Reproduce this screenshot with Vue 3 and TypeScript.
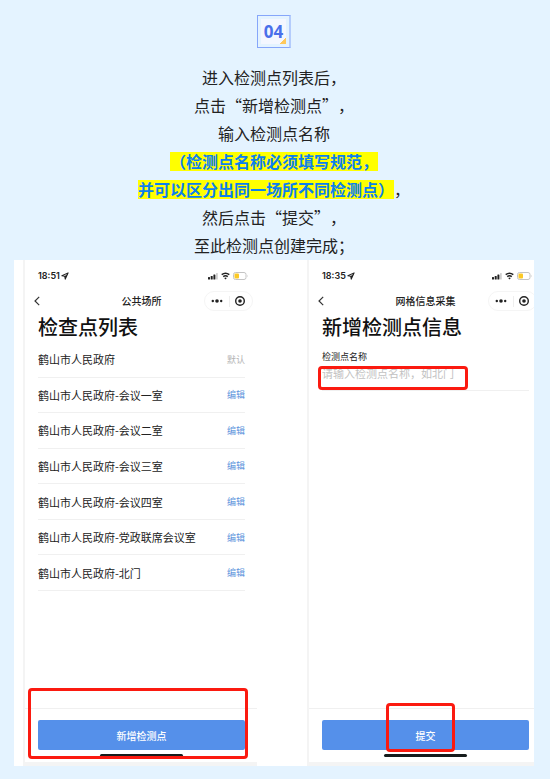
<script setup lang="ts">
import { ref } from 'vue'

interface Point {
  name: string
  action: string
  isDefault?: boolean
}

const points: Point[] = [
  { name: '鹤山市人民政府', action: '默认', isDefault: true },
  { name: '鹤山市人民政府-会议一室', action: '编辑' },
  { name: '鹤山市人民政府-会议二室', action: '编辑' },
  { name: '鹤山市人民政府-会议三室', action: '编辑' },
  { name: '鹤山市人民政府-会议四室', action: '编辑' },
  { name: '鹤山市人民政府-党政联席会议室', action: '编辑' },
  { name: '鹤山市人民政府-北门', action: '编辑' },
]

const screens = [
  { id: 'list', time: '18:51', nav: '公共场所', title: '检查点列表', submit: '新增检测点' },
  { id: 'form', time: '18:35', nav: '网格信息采集', title: '新增检测点信息', submit: '提交' },
]

const pointName = ref('')
</script>

<template>
  <main class="article">
    <div class="badge"><span class="badge-number">04</span></div>

    <div class="steps">
      <p>进入检测点列表后，</p>
      <p>点击“新增检测点”，</p>
      <p>输入检测点名称</p>
      <p><strong class="mark">（检测点名称必须填写规范，</strong></p>
      <p><strong class="mark">并可以区分出同一场所不同检测点）</strong>，</p>
      <p>然后点击“提交”，</p>
      <p>至此检测点创建完成；</p>
    </div>

    <div class="shots">
      <section v-for="s in screens" :key="s.id" class="phone" :class="s.id">
        <div class="screen">
          <div class="status">
            <span class="time">{{ s.time }}</span>
            <svg class="locate" width="8" height="8" viewBox="0 0 9 9">
              <path d="M8 1 L1 4.2 L4.2 4.8 L4.8 8 Z" fill="none" stroke="#222" stroke-width="1.2" stroke-linejoin="round" />
              <path d="M8 1 L4.2 4.8 L4.8 8 Z" fill="#222" />
            </svg>
            <svg class="signals" width="42" height="10" viewBox="0 0 42 10">
              <rect x="1" y="6" width="2" height="2.5" rx=".5" fill="#222" />
              <rect x="3.7" y="5" width="2" height="3.5" rx=".5" fill="#222" />
              <rect x="6.4" y="3.5" width="2" height="5" rx=".5" fill="#222" />
              <rect x="9.1" y="2" width="1.6" height="6.5" rx=".5" fill="#c9c9c9" />
              <path d="M14.7 3.7 Q18.5 .6 22.3 3.7" fill="none" stroke="#222" stroke-width="1.5" />
              <path d="M16.2 5.6 Q18.5 3.8 20.8 5.6" fill="none" stroke="#222" stroke-width="1.4" />
              <path d="M17.2 7 Q18.5 6.1 19.8 7 L18.5 8.5 Z" fill="#222" />
              <rect x="26.5" y="1.5" width="12.5" height="7" rx="2" fill="#fff" stroke="#c4c4c4" />
              <rect x="27.5" y="2.5" width="4.5" height="5" rx="1" fill="#fbc926" />
              <path d="M40.5 3.8 Q41.6 5 40.5 6.2 Z" fill="#bdbdbd" />
            </svg>
          </div>

          <header class="nav">
            <button class="back" aria-label="返回">
              <svg width="6" height="10" viewBox="0 0 6 10">
                <path d="M5.2 .8 L1 5 L5.2 9.2" fill="none" stroke="#333" stroke-width="1.2" />
              </svg>
            </button>
            <span class="nav-title">{{ s.nav }}</span>
            <div class="capsule">
              <button aria-label="更多">
                <svg width="12" height="10" viewBox="0 0 12 10">
                  <circle cx="1.8" cy="5" r="1.2" fill="#222" />
                  <circle cx="6" cy="5" r="1.8" fill="#222" />
                  <circle cx="10.2" cy="5" r="1.2" fill="#222" />
                </svg>
              </button>
              <button class="close" aria-label="关闭">
                <svg width="12" height="12" viewBox="0 0 12 12">
                  <circle cx="6" cy="6" r="4.3" fill="none" stroke="#222" stroke-width="1.4" />
                  <circle cx="6" cy="6" r="1.8" fill="#222" />
                </svg>
              </button>
            </div>
          </header>

          <h2 class="title">{{ s.title }}</h2>

          <ul v-if="s.id === 'list'" class="points">
            <li v-for="p in points" :key="p.name">
              <span>{{ p.name }}</span>
              <span v-if="p.isDefault" class="tag">{{ p.action }}</span>
              <button v-else class="tag edit">{{ p.action }}</button>
            </li>
          </ul>

          <form v-else class="field" @submit.prevent>
            <label for="point-name">检测点名称</label>
            <input id="point-name" v-model="pointName" type="text" placeholder="请输入检测点名称，如北门" />
            <span class="outline"></span>
          </form>

          <footer class="actions">
            <button class="primary">{{ s.submit }}</button>
            <span class="home"></span>
            <span class="outline"></span>
          </footer>
        </div>
      </section>
    </div>
  </main>
</template>

<style>
body {
  margin: 0;
  background: #e4f3ff;
}
</style>

<style scoped>
* {
  box-sizing: border-box;
}

.article {
  padding: 15px 16px 13px 14px;
  font-family: "Noto Sans CJK SC", sans-serif;
  text-spacing-trim: space-all;
  color: #222;
}

button {
  margin: 0;
  padding: 0;
  border: 0;
  background: none;
  font: inherit;
  color: inherit;
  cursor: pointer;
}

.badge {
  width: 34px;
  height: 33px;
  margin: 0 auto 15px;
  padding: 3px;
  border: 1px solid #86a6fa;
  border-right: 2px solid #b4ccfc;
}

.badge-number {
  display: block;
  height: 25px;
  background: linear-gradient(135deg, transparent 50%, #ffc85a 50%) right bottom / 7px 7px no-repeat #f4f7ff;
  font: bold 17px/25px "Open Sans", sans-serif;
  text-align: center;
  color: #4a6fea;
}

.steps {
  padding-bottom: 1px;
  font-size: 16px;
  line-height: 28px;
  text-align: center;
}

.steps p {
  height: 28px;
  margin: 0;
  white-space: nowrap;
}

.mark {
  display: inline-block;
  line-height: 19px;
  background: #ff0;
  color: #0c80ee;
}

.shots {
  display: grid;
  grid-template-columns: 234fr 227fr;
  gap: 50px;
  padding-left: 9px;
  background: #fff;
}

.phone {
  display: flex;
  min-width: 0;
  border: solid #f4f4f4;
  border-width: 0 0 4px 2px;
  overflow: hidden;
}

.screen {
  display: flex;
  flex: 1;
  flex-direction: column;
  min-width: 0;
  min-height: 502px;
  padding: 0 12px 0 13px;
}

.form .screen {
  margin-right: -7px;
}

.status {
  display: flex;
  align-items: center;
  height: 31px;
}

.time {
  font: 600 9px/12px Inter, sans-serif;
}

.locate {
  margin-left: 1px;
}

.signals {
  margin: 0 -4px 0 auto;
}

.nav {
  display: grid;
  grid-template-columns: 1fr auto 1fr;
  align-items: center;
  height: 20px;
  margin: 0 -8px 0 -4px;
}

.back {
  display: flex;
  justify-self: start;
}

.nav-title {
  padding-right: 4px;
  font-size: 10px;
  line-height: 20px;
  font-weight: 500;
}

.capsule {
  display: grid;
  grid-template-columns: 1fr 1fr;
  justify-self: end;
  width: 49px;
  height: 20px;
  border: 1px solid #f5f5f5;
  border-radius: 10px;
}

.capsule button {
  display: flex;
  align-items: center;
  justify-content: center;
}

.capsule .close {
  position: relative;
}

.capsule .close::before {
  content: "";
  position: absolute;
  left: 0;
  width: 1px;
  height: 11px;
  background: #eee;
}

.title {
  margin: 0;
  padding-top: 1px;
  font-size: 20px;
  font-weight: 500;
  line-height: 30px;
  color: #111;
  white-space: nowrap;
}

.points {
  display: grid;
  grid-auto-rows: 1fr;
  min-height: 249px;
  margin: 0;
  padding: 0;
  list-style: none;
  font-size: 11px;
}

.points li {
  display: flex;
  align-items: center;
  justify-content: space-between;
  border-bottom: 1px solid #f0f0f0;
  white-space: nowrap;
}

.tag {
  font-size: 9px;
  color: #b4b4b4;
}

.edit {
  color: #5c93dc;
}

.field {
  position: relative;
  display: flex;
  flex-direction: column;
  padding: 8px 0;
  border-bottom: 1px solid #f0f0f0;
}

.field label {
  font-size: 9px;
  line-height: 14px;
}

.field input {
  width: 100%;
  height: 18px;
  padding: 0;
  border: 0;
  outline: 0;
  background: none;
  font: 11px/18px "Noto Sans CJK SC", sans-serif;
}

.field input::placeholder {
  color: #c2c2c2;
  opacity: 1;
}

.outline {
  position: absolute;
  border: 3px solid #fb1a10;
  border-radius: 4px;
  pointer-events: none;
}

.field .outline {
  top: 24px;
  left: -4px;
  width: 150px;
  height: 24px;
}

.actions {
  position: relative;
  display: flex;
  flex-direction: column;
  margin: auto -12px 0 -13px;
  padding: 11px 12px 4px 13px;
  border-top: 1px solid #f0f0f0;
}

.primary {
  height: 30px;
  border-radius: 2px;
  background: #5590ea;
  font-size: 10px;
  font-weight: 500;
  color: #fff;
}

.home {
  align-self: center;
  width: 83px;
  height: 3px;
  margin: 4px 0 1px;
  border-radius: 2px;
  background: #161c1c;
}

.list .actions .outline {
  inset: -21px 9px 3px 3px;
}

.form .actions .outline {
  top: -6px;
  left: 50%;
  width: 69px;
  height: 49px;
  margin-left: -39px;
}
</style>
